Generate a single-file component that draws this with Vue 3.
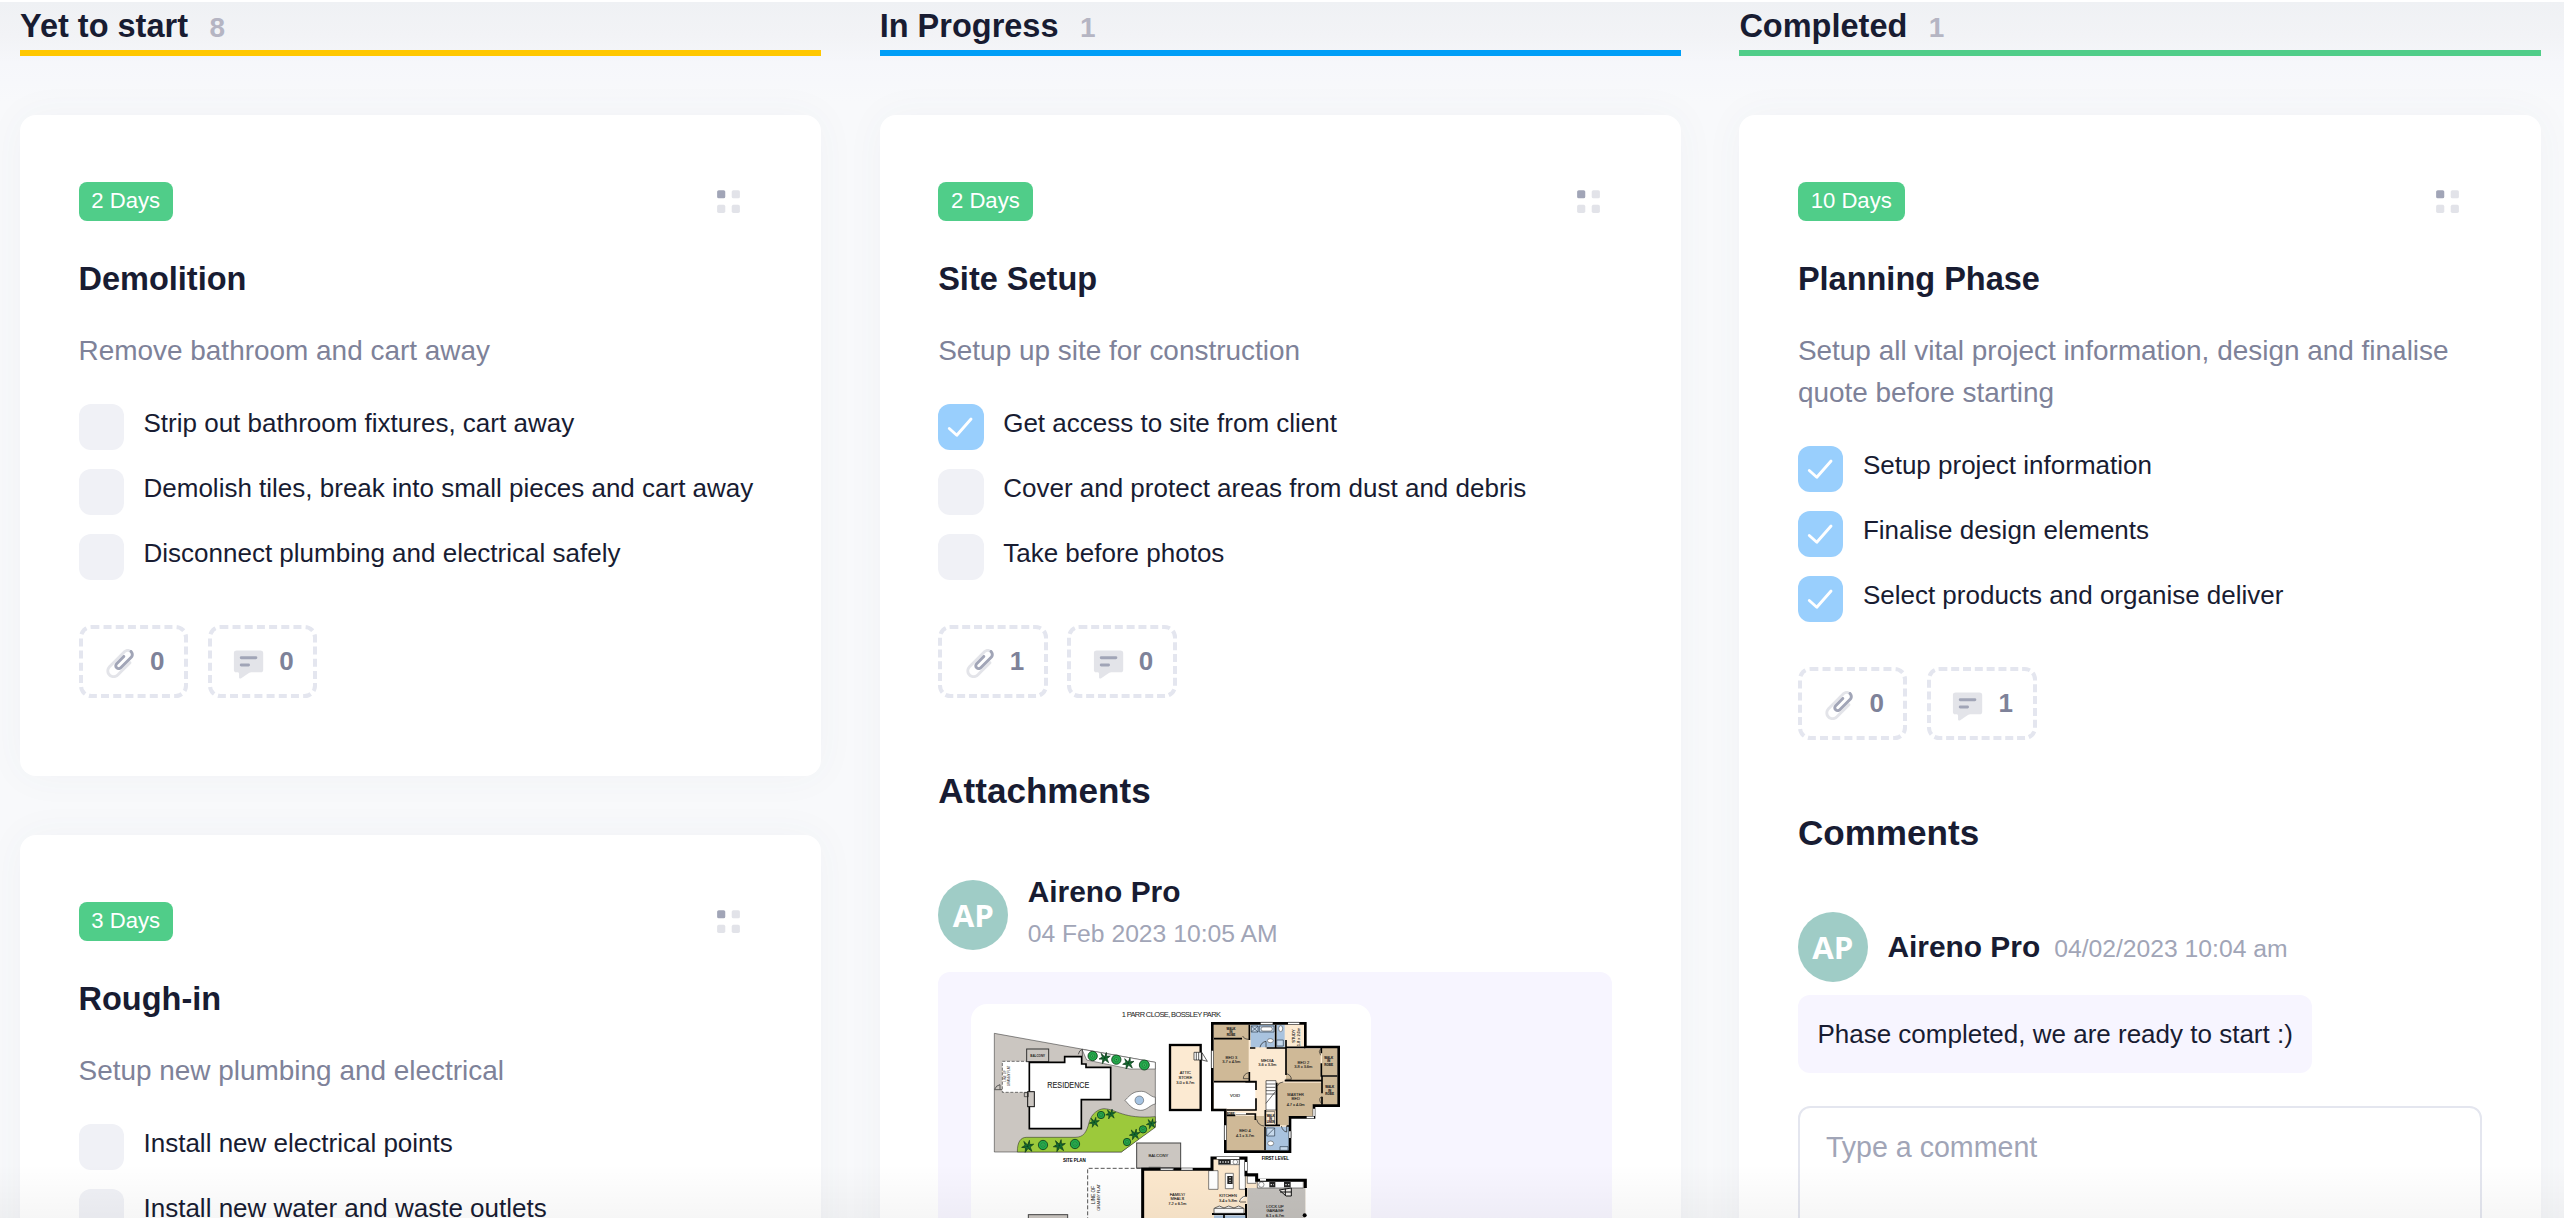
<script setup>
const columns = [
  {
    name: 'Yet to start', count: 8, tone: 'warning',
    cards: [
      {
        days: '2 Days', title: 'Demolition', text: 'Remove bathroom and cart away',
        tasks: [
          { label: 'Strip out bathroom fixtures, cart away', done: false },
          { label: 'Demolish tiles, break into small pieces and cart away', done: false },
          { label: 'Disconnect plumbing and electrical safely', done: false },
        ],
        files: 0, notes: 0,
      },
      {
        days: '3 Days', title: 'Rough-in', text: 'Setup new plumbing and electrical',
        tasks: [
          { label: 'Install new electrical points', done: false },
          { label: 'Install new water and waste outlets', done: false },
        ],
      },
    ],
  },
  {
    name: 'In Progress', count: 1, tone: 'primary',
    cards: [
      {
        days: '2 Days', title: 'Site Setup', text: 'Setup up site for construction',
        tasks: [
          { label: 'Get access to site from client', done: true },
          { label: 'Cover and protect areas from dust and debris', done: false },
          { label: 'Take before photos', done: false },
        ],
        files: 1, notes: 0,
        attachment: { author: 'Aireno Pro', initials: 'AP', date: '04 Feb 2023 10:05 AM' },
      },
    ],
  },
  {
    name: 'Completed', count: 1, tone: 'success',
    cards: [
      {
        days: '10 Days', title: 'Planning Phase',
        text: 'Setup all vital project information, design and finalise quote before starting',
        tasks: [
          { label: 'Setup project information', done: true },
          { label: 'Finalise design elements', done: true },
          { label: 'Select products and organise deliver', done: true },
        ],
        files: 0, notes: 1,
        comment: {
          author: 'Aireno Pro', initials: 'AP', date: '04/02/2023 10:04 am',
          body: 'Phase completed, we are ready to start :)',
        },
      },
    ],
  },
]

const shrubs = [[398, 288, 14], [469, 299, 14], [553, 315, 15], [423, 465, 11], [549, 508, 11], [501, 546, 11], [249, 555, 14], [345, 552, 14]]
const palms = [[434, 294, 17], [505, 310, 17], [403, 487, 15], [452, 462, 15], [574, 491, 15], [524, 523, 16], [203, 559, 18], [298, 557, 18]]
</script>

<template>
  <div class="board">
    <section v-for="col in columns" :key="col.name" class="column">
      <header class="column-head" :class="col.tone">
        <h2>{{ col.name }}</h2>
        <span class="count">{{ col.count }}</span>
      </header>

      <article v-for="card in col.cards" :key="card.title" class="card">
        <div class="card-head">
          <span class="badge">{{ card.days }}</span>
          <svg class="menu" viewBox="0 0 24 24">
            <rect x="5" y="5" width="5" height="5" rx="1" />
            <g opacity="0.3">
              <rect x="14" y="5" width="5" height="5" rx="1" />
              <rect x="5" y="14" width="5" height="5" rx="1" />
              <rect x="14" y="14" width="5" height="5" rx="1" />
            </g>
          </svg>
        </div>
        <h3 class="title">{{ card.title }}</h3>
        <p class="text">{{ card.text }}</p>

        <ul class="tasks">
          <li v-for="task in card.tasks" :key="task.label">
            <span class="check" :class="{ done: task.done }">
              <svg v-if="task.done" viewBox="0 0 46 46">
                <path d="M11.4 24.8 19 31.6 33.4 15.2" />
              </svg>
            </span>
            <span class="label">{{ task.label }}</span>
          </li>
        </ul>

        <div v-if="card.files !== undefined" class="counters">
          <div class="counter">
            <svg viewBox="0 0 24 24">
              <path opacity="0.3" d="M4.425 20.525C2.525 18.625 2.525 15.525 4.425 13.525L14.825 3.125C16.325 1.625 18.825 1.625 20.425 3.125C20.825 3.525 20.825 4.125 20.425 4.525C20.025 4.925 19.425 4.925 19.025 4.525C18.225 3.725 17.025 3.725 16.225 4.525L5.825 14.925C4.625 16.125 4.625 17.925 5.825 19.125C7.025 20.325 8.825 20.325 10.025 19.125L18.425 10.725C18.825 10.325 19.425 10.325 19.825 10.725C20.225 11.125 20.225 11.725 19.825 12.125L11.425 20.525C9.525 22.425 6.425 22.425 4.425 20.525Z" />
              <path d="M9.325 15.625C8.125 14.425 8.125 12.625 9.325 11.425L14.225 6.525C14.625 6.125 15.225 6.125 15.625 6.525C16.025 6.925 16.025 7.525 15.625 7.925L10.725 12.825C10.325 13.225 10.325 13.825 10.725 14.225C11.125 14.625 11.725 14.625 12.125 14.225L19.125 7.225C19.525 6.825 19.725 6.425 19.725 5.925C19.725 5.325 19.525 4.825 19.125 4.425C18.725 4.025 18.725 3.425 19.125 3.025C19.525 2.625 20.125 2.625 20.525 3.025C21.325 3.825 21.725 4.825 21.725 5.925C21.725 6.925 21.325 7.825 20.525 8.525L13.525 15.525C12.325 16.725 10.525 16.725 9.325 15.625Z" />
            </svg>
            <span>{{ card.files }}</span>
          </div>
          <div class="counter">
            <svg viewBox="0 0 24 24">
              <path opacity="0.3" d="M20 3H4C2.9 3 2 3.6 2 4.6V16.4C2 17.4 2.6 18 3.6 18H4.5C5.05 18 5.5 18.45 5.5 19V21.5C5.5 22.14 6.21 22.53 6.74 22.17L11.49 19C12.47 18.35 13.63 18 14.82 18H20.4C21.4 18 22 17.4 22 16.4V4.6C22 3.6 21.1 3 20 3Z" />
              <rect x="6" y="12" width="7" height="2" rx="1" />
              <rect x="6" y="7" width="12" height="2" rx="1" />
            </svg>
            <span>{{ card.notes }}</span>
          </div>
        </div>

        <template v-if="card.attachment">
          <h3 class="section">Attachments</h3>
          <div class="author attached">
            <span class="avatar">{{ card.attachment.initials }}</span>
            <div class="stacked">
              <div class="name">{{ card.attachment.author }}</div>
              <div class="date">{{ card.attachment.date }}</div>
            </div>
          </div>
          <div class="files">
            <svg class="plan" viewBox="33 132 1200 900">
              <rect x="33" y="132" width="1200" height="900" fill="#fff" />
              <text x="634" y="171" font-size="22.5" class="t" textLength="298">1 PARR CLOSE, BOSSLEY PARK</text>

              <!-- site plan -->
              <path d="M103 220 586 307V500L484 576H103Z" fill="#cbc6c1" stroke="#222" stroke-width="1.5" />
              <path d="M366 268 586 307V327H510L380 300Z" fill="#fff" stroke="#333" stroke-width="1.5" />
              <path d="M172 576C172 545 182 532 200 532H345C372 532 380 515 387 488C394 460 415 447 432 446C470 448 490 478 586 470V502L484 576Z" fill="#9cc93b" stroke="#222" stroke-width="1.5" />
              <path d="M495 421C515 400 522 394 545 394C562 394 570 410 586 412V432C570 434 562 451 542 451C518 449 512 440 495 421Z" fill="#fff" stroke="#222" stroke-width="1.5" />
              <circle cx="538" cy="421" r="13" fill="#a5c3e2" stroke="#444" stroke-width="1.5" />
              <rect x="127" y="304" width="82" height="93" fill="#fff" stroke="#333" stroke-width="2" stroke-dasharray="9 5" />
              <rect x="200" y="267" width="66" height="38" fill="#cbc6c1" stroke="#333" stroke-width="3" />
              <path d="M208 307H314V290H365V312H378V322H452V419H364V506H208Z" fill="#fff" stroke="#000" stroke-width="5" />
              <rect x="203" y="395" width="20" height="45" fill="#cbc6c1" stroke="#111" stroke-width="3" />
              <path d="M193 398h12v12h-12zM104 389h22M104 388q4-12 16-14v14M355 283q2-12 12-15v20" fill="none" stroke="#222" stroke-width="2" />
              <text x="233" y="290" font-size="9" class="t b">BALCONY</text>
              <text x="325" y="385" font-size="24.5" class="t m" textLength="126" lengthAdjust="spacingAndGlyphs">RESIDENCE</text>
              <text transform="translate(138 348) rotate(-90)" font-size="9" class="t">LINE OF</text>
              <text transform="translate(149 348) rotate(-90)" font-size="9" class="t">GRANNY FLAT</text>
              <g v-for="(s, i) in shrubs" :key="'s' + i" :transform="`translate(${s[0]} ${s[1]})`">
                <circle :r="s[2]" fill="#22a84a" stroke="#123d1c" stroke-width="2.5" />
                <circle :r="s[2] * 0.45" fill="#37b95a" stroke="#176b2e" stroke-width="1.5" />
                <circle r="1.8" fill="#123d1c" />
              </g>
              <g v-for="(p, i) in palms" :key="'p' + i" :transform="`translate(${p[0]} ${p[1]}) scale(${p[2] / 17})`">
                <path d="M0-4 5-17 6-5 17-6 7 2 12 14 1 6-7 17-6 4-17 3-7-3-11-14Z" fill="#178039" stroke="#0b3316" stroke-width="2" />
                <path d="M0 0 4-12M0 0 12-4M0 0 8 9M0 0-5 11M0 0-12 2M0 0-8-9" stroke="#0b3316" stroke-width="1.5" />
              </g>
              <text x="343" y="605" font-size="13.5" class="t bb" textLength="68">SITE PLAN</text>

              <!-- attic -->
              <rect x="630" y="255" width="92" height="195" fill="#fcead2" stroke="#000" stroke-width="7" />
              <path d="M702 277H724V300H702ZM709 277V300M716 277V300M726 278 742 304 726 300Z" fill="#fff" stroke="#111" stroke-width="2" />
              <text x="676" y="343" font-size="12" class="t m">ATTIC</text>
              <text x="676" y="357" font-size="12" class="t m">STORE</text>
              <text x="676" y="371" font-size="12" class="t m" textLength="54">3.0 x 6.7m</text>

              <!-- first level -->
              <path d="M757 190H1036V261H1136V437H1062V472H990V575H796V450H757Z" fill="#fcead2" />
              <path d="M762 194H866V362H762ZM978 266H1082V362H978ZM1086 262H1132V346H1086ZM1086 350H1132V434H1086ZM952 368H1086V436H1058V470H984V496H952ZM801 468H912V571H801Z" fill="#cfb997" />
              <path d="M872 194H944V262H872ZM950 194H974V262H950ZM918 500H988V571H918Z" fill="#a9c3df" />
              <rect x="762" y="368" width="124" height="78" fill="#fff" />
              <path d="M918 362H948V450H918ZM918 372H946M918 382H946M918 392H946M918 402H946M946 395 918 430" fill="#fff" stroke="#222" stroke-width="2" />
              <path d="M757 190H1036V261H1136V437H1062V472H990V575H796V450H757Z" fill="none" stroke="#000" stroke-width="8" />
              <path d="M762 365H888V390M888 415V450H800M868 194V240M868 336V364M762 236H846M870 264H886M920 264H978V240M947 194V262M978 262H1036M978 266V345M974 362H1086M1084 262V280M1084 310V350M1086 348H1132M1086 350V400M1086 434V410M950 368V496M916 450V496H960M980 498H990M915 500V571M800 466H826M858 462H886V480M888 366H856" fill="none" stroke="#000" stroke-width="5" />
              <path d="M828 461H858M757 272V324M796 496V540M902 190H938M984 190H1018M1040 472H1062M990 514V534M1062 446V468" fill="none" stroke="#fff" stroke-width="5" />
              <path d="M828 464H858M754 272V324M793 496V540M902 187H938M984 187H1018M993 514V534" fill="none" stroke="#555" stroke-width="2" />
              <path d="M866 338q-16 4-16 18h18M976 340q18 4 18 18h-18M848 228q4 10 20 10M900 262q4-16 18-18v18M952 378q4-12 18-12M912 498q-18-2-22-20M964 498q4 16 16 18v-18M1082 266q-8 8 0 20M1084 410q-10 8 0 20" fill="none" stroke="#222" stroke-width="2" />
              <path d="M898 198H942V216H898ZM874 198H894V216H874ZM920 504H944V528H920ZM950 240H970V258H950ZM960 560H984V571H960ZM874 198 894 216M894 198 874 216M920 528 944 504" fill="#c6d9ec" stroke="#2b3b4d" stroke-width="2" />
              <g fill="#fff" stroke="#333" stroke-width="1.5">
                <rect x="903" y="201" width="34" height="12" rx="6" /><ellipse cx="931" cy="242" rx="9" ry="6" />
                <ellipse cx="962" cy="206" rx="6" ry="9" /><ellipse cx="932" cy="550" rx="9" ry="7" />
                <rect x="918" y="454" width="26" height="40" fill="#fcead2" />
              </g>
              <g class="m">
                <text x="813" y="209" font-size="9" class="t b">WALK</text><text x="813" y="218" font-size="9" class="t b">IN</text><text x="813" y="228" font-size="9" class="t b">ROBE</text>
                <text x="814" y="297" font-size="12" class="t">BED 3</text><text x="814" y="308" font-size="12" class="t" textLength="54">3.7 x 4.5m</text>
                <text x="922" y="306" font-size="12" class="t">MEDIA</text><text x="922" y="319" font-size="12" class="t" textLength="54">3.6 x 3.3m</text>
                <text x="1030" y="311" font-size="12" class="t">BED 2</text><text x="1030" y="325" font-size="12" class="t" textLength="54">3.8 x 3.6m</text>
                <text x="1106" y="296" font-size="9" class="t b">WALK</text><text x="1106" y="307" font-size="9" class="t b">IN</text><text x="1106" y="318" font-size="9" class="t b">ROBE</text>
                <text x="1109" y="384" font-size="9" class="t b">WALK</text><text x="1109" y="395" font-size="9" class="t b">IN</text><text x="1109" y="405" font-size="9" class="t b">ROBE</text>
                <text x="825" y="411" font-size="12.5" class="t">VOID</text>
                <text x="1007" y="408" font-size="12" class="t">MASTER</text><text x="1007" y="421" font-size="12" class="t">BED</text><text x="1007" y="437" font-size="12" class="t" textLength="54">4.7 x 4.0m</text>
                <text x="855" y="516" font-size="12" class="t">BED 4</text><text x="855" y="531" font-size="12" class="t" textLength="54">4.1 x 3.7m</text>
                <text x="812" y="464" font-size="8" class="t b">ROBE</text>
                <text x="932" y="472" font-size="8" class="t b">WALK</text><text x="932" y="481" font-size="8" class="t b">IN</text><text x="932" y="490" font-size="8" class="t b">LINEN</text>
                <text transform="translate(1004 228) rotate(-90)" font-size="12" class="t">STUDY</text>
                <text transform="translate(1019 231) rotate(-90)" font-size="12" class="t">1.8 x 2.0m</text>
              </g>
              <text x="946" y="601" font-size="13.5" class="t bb" textLength="82">FIRST LEVEL</text>

              <!-- ground level -->
              <path d="M542 625H383V900" fill="none" stroke="#555" stroke-width="3" stroke-dasharray="12 6" />
              <rect x="205" y="764" width="118" height="100" fill="#cbc6c1" stroke="#444" stroke-width="3" />
              <rect x="530" y="549" width="132" height="75" fill="#cbc6c1" stroke="#444" stroke-width="3" />
              <path d="M548 628H756V595H856V645H888V662H1036V900H548Z" fill="#fce8cd" />
              <path d="M862 684H1036V900H862Z" fill="#c3c0bc" />
              <path d="M892 662H1030V684H892ZM862 648H888V670H862ZM746 632H774V688H746ZM838 598H856V688H838ZM776 598H838V614H776ZM796 640H820V686H796Z" fill="#fff" stroke="#444" stroke-width="2" />
              <path d="M776 600H812V613H776ZM802 648H818V672H802ZM928 666H946V682H928ZM972 666H992V682H972Z" fill="#222" />
              <path d="M779 606H809M810 651V669M932 674H942M976 674H988" stroke="#ddd" stroke-width="4" stroke-dasharray="4 4" />
              <g fill="#fff" stroke="#333" stroke-width="1.5"><circle cx="826" cy="606" r="7" /><circle cx="904" cy="674" r="8" /></g>
              <path d="M958 690 994 684V708H978ZM976 686V706M960 696H994" fill="#ece9e5" stroke="#111" stroke-width="3" />
              <path d="M548 780V628H756V594H858V644H890V661H1036V684" fill="none" stroke="#000" stroke-width="9" />
              <path d="M602 628H640M664 628H698M770 594H838M858 606V632M900 659H918" fill="none" stroke="#fff" stroke-width="6" />
              <path d="M602 624H640V631H602M664 631H698M566 622H602" fill="none" stroke="#444" stroke-width="3" />
              <path d="M858 684V710M858 732V780M756 762H858" fill="none" stroke="#000" stroke-width="6" />
              <path d="M838 726q4-16 20-18M840 726H858M762 745H852V760H762ZM764 744 778 738 792 744 806 738 822 744 836 738 850 744" fill="#fff" stroke="#222" stroke-width="2" />
              <path d="M762 766H856V800H762Z" fill="#a9c3df" /><path d="M792 764V800" stroke="#000" stroke-width="5" />
              <circle cx="1034" cy="766" r="6" />
              <text x="595" y="592" font-size="12.5" class="t m">BALCONY</text>
              <text transform="translate(404 705) rotate(-90)" font-size="14" class="t">LINE OF</text>
              <text transform="translate(420 712) rotate(-90)" font-size="12.5" class="t" textLength="80">GRANNY FLAT</text>
              <g class="m">
                <text x="652" y="707" font-size="12" class="t">FAMILY/</text><text x="652" y="721" font-size="12" class="t">MEALS</text><text x="652" y="735" font-size="12" class="t" textLength="54">7.2 x 6.1m</text>
                <text x="804" y="711" font-size="12" class="t">KITCHEN</text><text x="804" y="725" font-size="12" class="t" textLength="54">3.4 x 5.8m</text>
                <text x="945" y="743" font-size="12" class="t">LOCK UP</text><text x="945" y="757" font-size="12" class="t">GARAGE</text><text x="945" y="771" font-size="12" class="t" textLength="54">6.1 x 6.7m</text>
              </g>
            </svg>
          </div>
        </template>

        <template v-if="card.comment">
          <h3 class="section">Comments</h3>
          <div class="author">
            <span class="avatar">{{ card.comment.initials }}</span>
            <div class="inline">
              <span class="name">{{ card.comment.author }}</span>
              <span class="date">{{ card.comment.date }}</span>
            </div>
          </div>
          <div class="bubble">{{ card.comment.body }}</div>
          <div class="input">Type a comment</div>
        </template>
      </article>
    </section>
    <div class="fade"></div>
  </div>
</template>

<style>
body { margin: 0; background: #f7f8fb; }
</style>

<style scoped>
.board {
  position: relative;
  box-sizing: border-box;
  width: 2564px;
  height: 1218px;
  overflow: hidden;
  display: grid;
  grid-template-columns: repeat(3, 801.2px);
  column-gap: 58.5px;
  align-items: start;
  padding: 0 20px;
  border-top: 2px solid #fff;
  background: linear-gradient(#eff1f4 0, #f2f3f6 34px, #f5f6fa 58px, #f6f7fb 60px, #f8f9fb 100px);
  font-family: "Liberation Sans", Arial, Helvetica, sans-serif;
  color: #181c32;
}
h2, h3, p, ul { margin: 0; padding: 0; }
.column-head {
  box-sizing: border-box;
  height: 54px;
  display: flex;
  align-items: baseline;
  gap: 21.5px;
  border-bottom: 6px solid;
}
.column-head.warning { border-color: #ffc700; }
.column-head.primary { border-color: #009ef7; }
.column-head.success { border-color: #50cd89; }
h2 { font-size: 32.5px; line-height: 48px; color: #181c32; }
.count { font-size: 27.95px; font-weight: 700; color: #b5b5c3; }
.card {
  box-sizing: border-box;
  margin-top: 59px;
  padding: 67px 58.5px 78px;
  border-radius: 16px;
  background: #fff;
  box-shadow: 0 0 40px rgba(76, 87, 125, 0.045);
}
.card-head {
  height: 39px;
  display: flex;
  align-items: center;
  justify-content: space-between;
  padding-right: 14.6px;
}
.badge {
  height: 39px;
  padding: 0 12.8px;
  border-radius: 8px;
  background: #50cd89;
  color: #fff;
  font-size: 22.1px;
  line-height: 37px;
}
.menu { width: 39px; height: 39px; fill: #a1a5b7; }
.title { margin-top: 34px; font-size: 32.5px; line-height: 49px; }
.text { margin-top: 26px; font-size: 27.95px; line-height: 42px; color: #7e8299; }
.tasks {
  margin-top: 32px;
  list-style: none;
  display: flex;
  flex-direction: column;
  gap: 19.5px;
}
.tasks li { display: flex; gap: 19.5px; height: 45.5px; }
.check { flex: none; width: 45.5px; height: 45.5px; border-radius: 12px; background: #f0f1f6; }
.check.done { background: #99cffd; }
.check svg { display: block; width: 45.5px; height: 45.5px; }
.check path { fill: none; stroke: #fff; stroke-width: 2.9; stroke-linecap: round; stroke-linejoin: round; }
.label { font-size: 26px; line-height: 38px; white-space: nowrap; }
.counters { display: flex; gap: 19.5px; margin-top: 45.5px; }
.counter {
  box-sizing: border-box;
  height: 73px;
  display: flex;
  align-items: center;
  gap: 13px;
  padding: 0 19.5px;
  border: 4px dashed #e4e6ef;
  border-radius: 12.35px;
  font-size: 26px;
  font-weight: 700;
  color: #7e8299;
}
.counter svg { width: 35.1px; height: 35.1px; margin-top: 4px; fill: #a1a5b7; }
.section { margin-top: 71.5px; font-size: 35.1px; line-height: 42px; }
.author { display: flex; align-items: center; gap: 19.5px; height: 70px; margin-top: 58.5px; }
.author.attached { margin-top: 68.5px; }
.avatar {
  flex: none;
  width: 70px;
  height: 70px;
  border-radius: 50%;
  background: #9fccc6;
  color: #fff;
  font: 700 31.2px/70px "Open Sans", "Noto Sans", sans-serif;
  text-align: center;
}
.stacked { margin-top: -8px; }
.stacked .date { margin-top: 2px; }
.inline { display: flex; align-items: baseline; gap: 14px; margin-top: -1px; }
.name { font-size: 29.9px; line-height: 42px; font-weight: 700; }
.date { font-size: 24.7px; line-height: 37px; color: #a1a5b7; }
.files {
  width: 673.5px;
  box-sizing: border-box;
  margin-top: 22px;
  padding: 32px 32.8px;
  border-radius: 12px;
  background: #f7f5ff;
}
.plan { display: block; width: 400px; height: 300px; border-radius: 16px; }
.t { font-family: "Liberation Sans", Arial, sans-serif; fill: #222; text-anchor: middle; }
.m { stroke: #222; stroke-width: 0.3; }
.b { font-weight: 700; }
.bb { font-weight: 700; fill: #000; }
.bubble {
  width: fit-content;
  margin-top: 13px;
  padding: 0 19.5px;
  border-radius: 12px;
  background: #f7f5ff;
  font-size: 26px;
  line-height: 78px;
}
.input {
  box-sizing: border-box;
  height: 200px;
  margin-top: 33px;
  padding: 18px 26px;
  border: 2px solid #e4e6ef;
  border-radius: 12.35px;
  font-size: 28.6px;
  line-height: 43px;
  color: #a1a5b7;
}
.fade {
  position: absolute;
  left: 0;
  right: 0;
  bottom: 0;
  height: 54px;
  background: linear-gradient(rgba(0, 0, 0, 0), rgba(0, 0, 0, 0.035));
  pointer-events: none;
}
</style>
